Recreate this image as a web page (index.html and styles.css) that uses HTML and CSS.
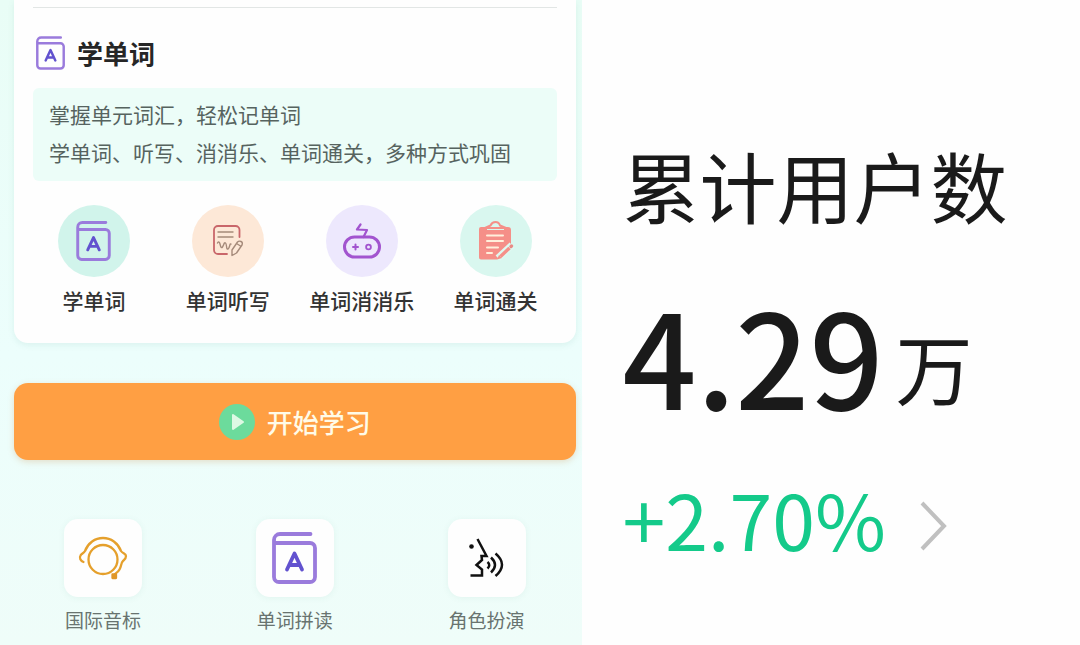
FILE: index.html
```html
<!DOCTYPE html>
<html lang="zh-CN">
<head>
    <meta charset="UTF-8">
    <meta name="viewport" content="width=device-width, initial-scale=1.0">
    <title>学单词</title>
    <link rel="stylesheet" href="styles.css">
</head>
<body>
    <!-- book icon, used three times -->
    <svg class="sprite" aria-hidden="true">
        <symbol id="book" viewBox="0 0 45 52">
            <g fill="none" stroke-linecap="round" stroke-linejoin="round">
                <path stroke="#9a7bdc" stroke-width="3.8" d="M38.500 2H8a6 6 0 0 0-6 6v37a5 5 0 0 0 5 5h31a5 5 0 0 0 5-5V16a5 5 0 0 0-5-5H2.500"/>
                <path stroke="#6252cf" stroke-width="3.800" d="M15 37.500l7.500-16 7.500 16M18 33h9"/>
            </g>
        </symbol>
    </svg>

    <div class="page">
        <main class="app">
            <section class="card">
                <hr class="divider">
                <h2 class="card-title">
                    <svg class="title-icon" aria-hidden="true"><use href="#book"/></svg>
                    学单词
                </h2>
                <div class="tips">
                    <p>掌握单元词汇，轻松记单词</p>
                    <p>学单词、听写、消消乐、单词通关，多种方式巩固</p>
                </div>
                <div class="modes">
                    <button class="mode">
                        <span class="circle mint"><svg class="book-icon" aria-hidden="true"><use href="#book"/></svg></span>
                        学单词
                    </button>
                    <button class="mode">
                        <span class="circle peach">
                            <svg width="30" height="32" viewBox="0 0 30 32" fill="none" stroke-linecap="round" stroke-linejoin="round" aria-hidden="true">
                                <path stroke="#c9666a" stroke-width="1.8" d="M26.500 12V5a4 4 0 0 0-4-4H5a4 4 0 0 0-4 4v20a4 4 0 0 0 4 4h9"/>
                                <g stroke="#a58a7a" stroke-width="1.400">
                                    <path d="M5 7h15M5 12h15"/>
                                    <path d="M4.500 18c1-2 2-1 2.500 1s1 5 2.500 3 1.500-5 3-4 .5 7 2.500 6 1.500-6 3-5"/>
                                    <path d="M19 25l5.500-8q1.500-1.500 3.500-.5t1 3.500l-5.500 8-4.500 2.500zM23.500 18.500l4 2.500"/>
                                </g>
                            </svg>
                        </span>
                        单词听写
                    </button>
                    <button class="mode">
                        <span class="circle lilac">
                            <svg width="38" height="36" viewBox="0 0 38 36" fill="none" stroke="#a254cf" stroke-linecap="round" stroke-linejoin="round" aria-hidden="true">
                                <rect x="1.500" y="14" width="35" height="20" rx="10" stroke-width="3"/>
                                <path stroke-width="2.200" d="M17.500 1.500l-3.500 5 10 .5-3.500 7"/>
                                <path stroke-width="2" d="M10 24h5M12.500 21.500v5"/>
                                <circle cx="25.500" cy="24" r="2.400" stroke-width="1.800"/>
                            </svg>
                        </span>
                        单词消消乐
                    </button>
                    <button class="mode">
                        <span class="circle aqua">
                            <svg width="36" height="40" viewBox="0 0 36 40" aria-hidden="true">
                                <path fill="#f58f88" d="M3 6h6v3h17V6h4a3 3 0 0 1 3 3v15L19 38.500H3a2 2 0 0 1-2-2V8a2 2 0 0 1 2-2z"/>
                                <path fill="none" stroke="#f58f88" stroke-width="2" stroke-linejoin="round" d="M7 7l5.500-2.500Q14 1 17.500 1T22 4.500L28 7z"/>
                                <path fill="none" stroke="#fff0dc" stroke-width="2" stroke-linecap="round" d="M9 14.500h16M9 20h16M9 26.500h11M9 32h5"/>
                                <path stroke="#dff9f1" stroke-width="7" d="M20 37l14-13"/>
                                <path stroke="#f58f88" stroke-width="3.400" d="M22.500 35.500l9-8.500"/>
                                <path stroke="#e98b86" stroke-width="3.400" stroke-linecap="round" d="M33 25.500l.5-.5"/>
                                <path fill="#f58f88" d="M21 34l3 3-5 1.500z"/>
                            </svg>
                        </span>
                        单词通关
                    </button>
                </div>
            </section>

            <button class="start">
                <span class="play">
                    <svg width="14" height="18" viewBox="0 0 14 18" aria-hidden="true">
                        <path fill="#def9e4" stroke="#def9e4" stroke-width="2" stroke-linejoin="round" d="M2 2l10 7-10 7z"/>
                    </svg>
                </span>
                开始学习
            </button>

            <nav class="tools">
                <a class="tool" href="#">
                    <span class="tile">
                        <svg width="50" height="44" viewBox="0 0 50 44" fill="none" stroke="#e5a02c" stroke-width="2.300" stroke-linecap="round" stroke-linejoin="round" aria-hidden="true">
                            <circle cx="25" cy="23.500" r="14.500"/>
                            <path d="M5.500 26c-3-1-4.500-4-3-6.500 1-2 3-2 4.500-4.500C10 7 17 2 25 2s15 5 18 13c1.500 2.500 5 2.500 5 5s-1 3-3 5c-2 1.500-1.500 5-3.500 8.500-1 2-2.500 3-4.500 4.500"/>
                            <rect x="34.500" y="38.500" width="3.500" height="3.500" fill="#e09628" stroke="#e09628"/>
                        </svg>
                    </span>
                    国际音标
                </a>
                <a class="tool" href="#">
                    <span class="tile"><svg class="tile-book" aria-hidden="true"><use href="#book"/></svg></span>
                    单词拼读
                </a>
                <a class="tool" href="#">
                    <span class="tile">
                        <svg width="36" height="40" viewBox="0 0 36 40" fill="none" stroke="#111" stroke-width="2.500" aria-hidden="true">
                            <circle cx="2.500" cy="8.500" r="2.300" fill="#111" stroke="none"/>
                            <path d="M8.500 1l9 17h-5l.5 4-5.500 5 5.500 4.500v6H1.500"/>
                            <path d="M18.500 24q3.500 3 0 6.500M22 19.500q8 7.500 0 15M26.500 15.500q13 11 0 22.500"/>
                        </svg>
                    </span>
                    角色扮演
                </a>
            </nav>
        </main>

        <aside class="stats">
            <h1 class="stats-label">累计用户数</h1>
            <div class="stats-value">4.29<span class="unit">万</span></div>
            <a class="stats-change" href="#">
                +2.70%
                <svg width="28" height="50" viewBox="0 0 28 50" fill="none" stroke="#c0c0c0" stroke-width="4" aria-hidden="true">
                    <path d="M2 2l22 23L2 48"/>
                </svg>
            </a>
        </aside>
    </div>
</body>
</html>
```
FILE: styles.css
```css
* {
    box-sizing: border-box;
}

body {
    margin: 0;
    background: #fefefe;
    color: #333;
    font-family: "Noto Sans CJK SC", sans-serif;
}

h1, h2, p {
    margin: 0;
}

button {
    border: 0;
    padding: 0;
    background: none;
    color: inherit;
    font-family: inherit;
    cursor: pointer;
}

a {
    color: inherit;
    text-decoration: none;
}

svg {
    display: block;
    flex: none;
}

.sprite {
    position: absolute;
    width: 0;
    height: 0;
}

.page {
    display: grid;
    grid-template-columns: 7fr 6fr;
    min-height: 100vh;
}

/* left side */
.app {
    padding: 0 6px 10px 14px;
    background: linear-gradient(#e9fdf6, #ecfefc 55%, #effdf9);
}

.card {
    padding: 7px 19px 28px;
    background: #fefefe;
    border-radius: 0 0 14px 14px;
    box-shadow: 0 2px 6px rgba(60, 140, 120, 0.1);
}

.divider {
    height: 1px;
    margin: 0 0 28px;
    border: 0;
    background: #e2e6e5;
}

.card-title {
    display: flex;
    align-items: center;
    gap: 12px;
    padding-left: 3px;
    font-size: 26px;
    line-height: 34px;
    color: #262626;
}

.title-icon {
    width: 29px;
    height: 34px;
}

.tips {
    margin-top: 18px;
    padding: 7px 16px 10px;
    background: #ecfdf8;
    border-radius: 6px;
    color: #56635f;
    font-size: 21px;
    line-height: 38px;
}

.modes {
    display: grid;
    grid-template-columns: repeat(4, 1fr);
    margin: 24px -6px 0;
}

.mode {
    display: flex;
    flex-direction: column;
    align-items: center;
    gap: 8px;
    font-size: 21px;
    font-weight: 500;
    line-height: 30px;
    white-space: nowrap;
}

.circle {
    display: flex;
    align-items: center;
    justify-content: center;
    width: 72px;
    height: 72px;
    border-radius: 50%;
}

.mint {
    background: #d1f4eb;
}

.peach {
    background: #fde8d7;
}

.lilac {
    background: #ede8fd;
}

.aqua {
    background: #d9f7ef;
}

.book-icon {
    width: 35px;
    height: 40px;
}

.start {
    display: flex;
    align-items: center;
    justify-content: center;
    gap: 12px;
    width: 100%;
    height: 77px;
    margin-top: 40px;
    background: #ff9f43;
    border-radius: 14px;
    box-shadow: 0 2px 6px rgba(200, 130, 60, 0.25);
    color: #fffbe8;
    font-size: 26px;
    font-weight: 500;
}

.play {
    display: flex;
    align-items: center;
    justify-content: center;
    width: 36px;
    height: 36px;
    padding-left: 2px;
    border-radius: 50%;
    background: #6cdb9c;
}

.tools {
    display: flex;
    justify-content: space-between;
    margin-top: 59px;
    padding: 0 50px;
}

.tool {
    display: flex;
    flex-direction: column;
    align-items: center;
    gap: 10px;
    color: #68736f;
    font-size: 19px;
    line-height: 26px;
}

.tile {
    display: flex;
    align-items: center;
    justify-content: center;
    width: 78px;
    height: 78px;
    border-radius: 14px;
    background: #fefefe;
    box-shadow: 0 1px 6px rgba(60, 140, 120, 0.08);
}

.tile-book {
    width: 45px;
    height: 52px;
}

/* right side */
.stats {
    padding: 140px 0 0 41px;
    color: #1a1a1a;
    white-space: nowrap;
}

.stats-label {
    font-size: 77px;
    font-weight: 400;
    line-height: 90px;
}

.stats-value {
    display: flex;
    align-items: flex-end;
    gap: 12px;
    margin-top: 48px;
    font-size: 130px;
    font-weight: 500;
    line-height: 150px;
}

.unit {
    margin-bottom: 16px;
    font-size: 77px;
    font-weight: 400;
    line-height: 90px;
}

.stats-change {
    display: flex;
    align-items: baseline;
    gap: 34px;
    margin-top: 45px;
    color: #14ca8a;
    font-size: 77px;
    line-height: 90px;
}
```
